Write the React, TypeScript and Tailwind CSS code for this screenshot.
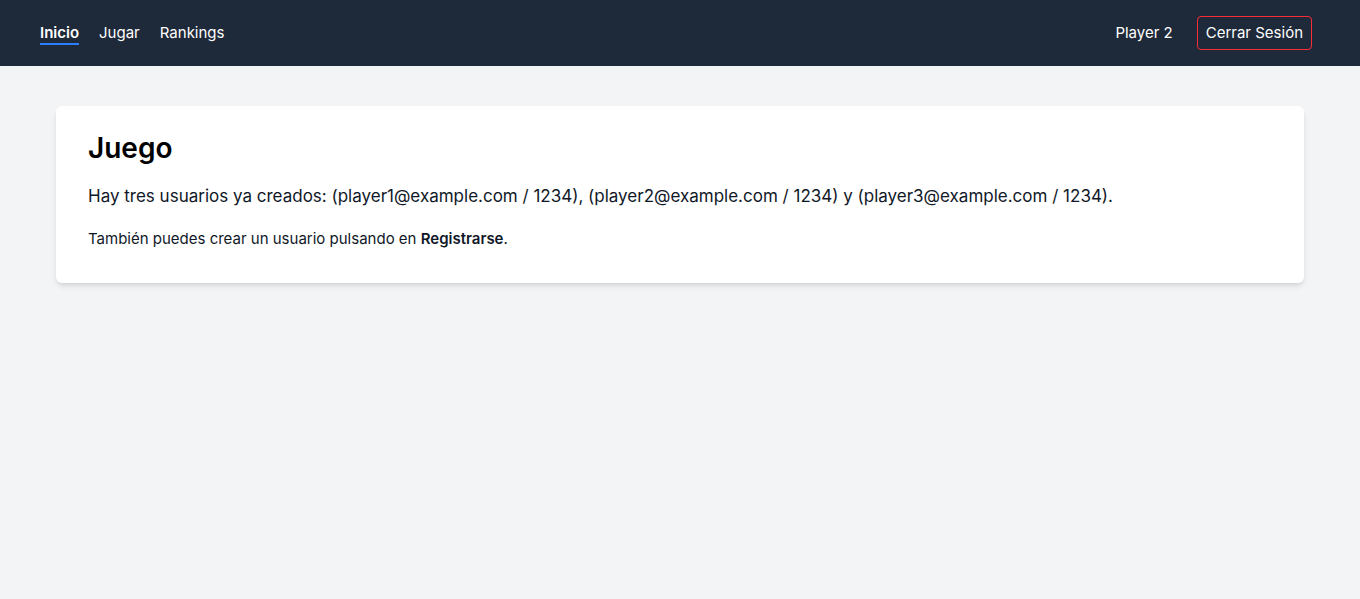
export default function App() {
  return (
    <div className="min-h-screen bg-gray-100 font-['Inter',sans-serif]">
      <nav className="h-[66px] bg-gray-800 flex items-center justify-between pl-10 pr-12 text-white">
        <div className="flex items-center gap-5 text-[15px] pt-0.5">
          <a className="font-semibold border-b-2 border-blue-500 leading-5">Inicio</a>
          <a className="leading-5 border-b-2 border-transparent">Jugar</a>
          <a className="leading-5 border-b-2 border-transparent">Rankings</a>
        </div>
        <div className="flex items-center gap-6 text-[15px]">
          <span>Player 2</span>
          <button className="border border-red-500 rounded px-2 h-[34px]">Cerrar Sesión</button>
        </div>
      </nav>
      <main className="px-14 pt-10">
        <div className="bg-white rounded-md shadow-md px-8 pt-6 pb-8">
          <h1 className="text-[28px] leading-9 font-semibold text-black">Juego</h1>
          <p className="mt-4 text-[17px] leading-7 text-gray-900">
            Hay tres usuarios ya creados: (player1@example.com / 1234), (player2@example.com / 1234) y (player3@example.com / 1234).
          </p>
          <p className="mt-[18px] text-[15px] text-gray-900">
            También puedes crear un usuario pulsando en <strong className="font-semibold">Registrarse</strong>.
          </p>
        </div>
      </main>
    </div>
  );
}
